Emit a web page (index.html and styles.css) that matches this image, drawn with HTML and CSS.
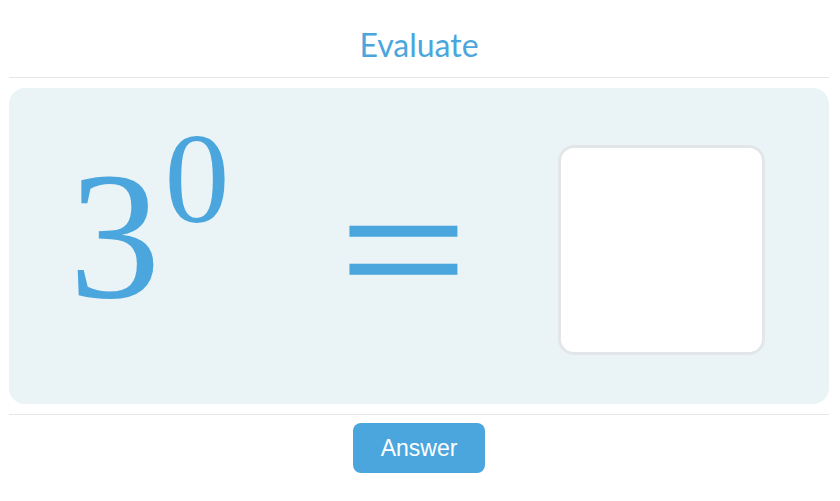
FILE: index.html
```html
<!DOCTYPE html>
<html lang="en">
<head>
    <meta charset="UTF-8">
    <title>Evaluate</title>
    <link rel="stylesheet" href="styles.css">
</head>
<body>
    <div class="page">
        <header class="title">Evaluate</header>
        <main class="panel">
            <div class="expr">3<span class="power">0</span></div>
            <div class="equals"><span>=</span></div>
            <div class="answer-box"></div>
        </main>
        <footer class="actions">
            <button class="answer-btn" type="button">Answer</button>
        </footer>
    </div>
</body>
</html>
```

FILE: styles.css
```css
body {
    margin: 0;
    padding: 0;
    background-color: #fff;
    font-family: "Liberation Sans", Arial, sans-serif;
}

.page {
    width: 820px;
    margin-left: 9px;
}

.title {
    height: 66px;
    padding-top: 11px;
    border-bottom: 1px solid #e6e6e6;
    display: flex;
    align-items: center;
    justify-content: center;
    font-family: Lato, sans-serif;
    font-size: 32px;
    color: #4aa6dc;
}

.panel {
    margin-top: 10px;
    height: 316px;
    border-radius: 16px;
    background-color: #eaf3f6;
    display: flex;
    align-items: center;
    padding-left: 60px;
    color: #4aa6dc;
    font-family: "Liberation Serif", "Times New Roman", serif;
}

.expr {
    font-size: 183px;
    line-height: 1;
    width: 270px;
    margin-bottom: 22px;
}

.power {
    font-size: 130px;
    position: relative;
    top: -75px;
    margin-left: 4px;
}

.equals {
    font-size: 190px;
    line-height: 1;
    width: 219px;
    margin-top: 8px;
}

.equals span {
    display: inline-block;
    transform: scaleX(1.2);
    transform-origin: left center;
    -webkit-text-stroke: 1.5px #4aa6dc;
}

.answer-box {
    width: 201px;
    height: 204px;
    border: 3px solid #e3e6e8;
    border-radius: 16px;
    background-color: #fff;
    margin-top: 8px;
}

.actions {
    margin-top: 10px;
    border-top: 1px solid #e6e6e6;
    padding-top: 8px;
    display: flex;
    justify-content: center;
}

.answer-btn {
    width: 132px;
    height: 50px;
    border: none;
    border-radius: 8px;
    background-color: #4aa6dc;
    color: #fff;
    font-family: "Liberation Sans", Arial, sans-serif;
    font-size: 23px;
    cursor: pointer;
}
```
